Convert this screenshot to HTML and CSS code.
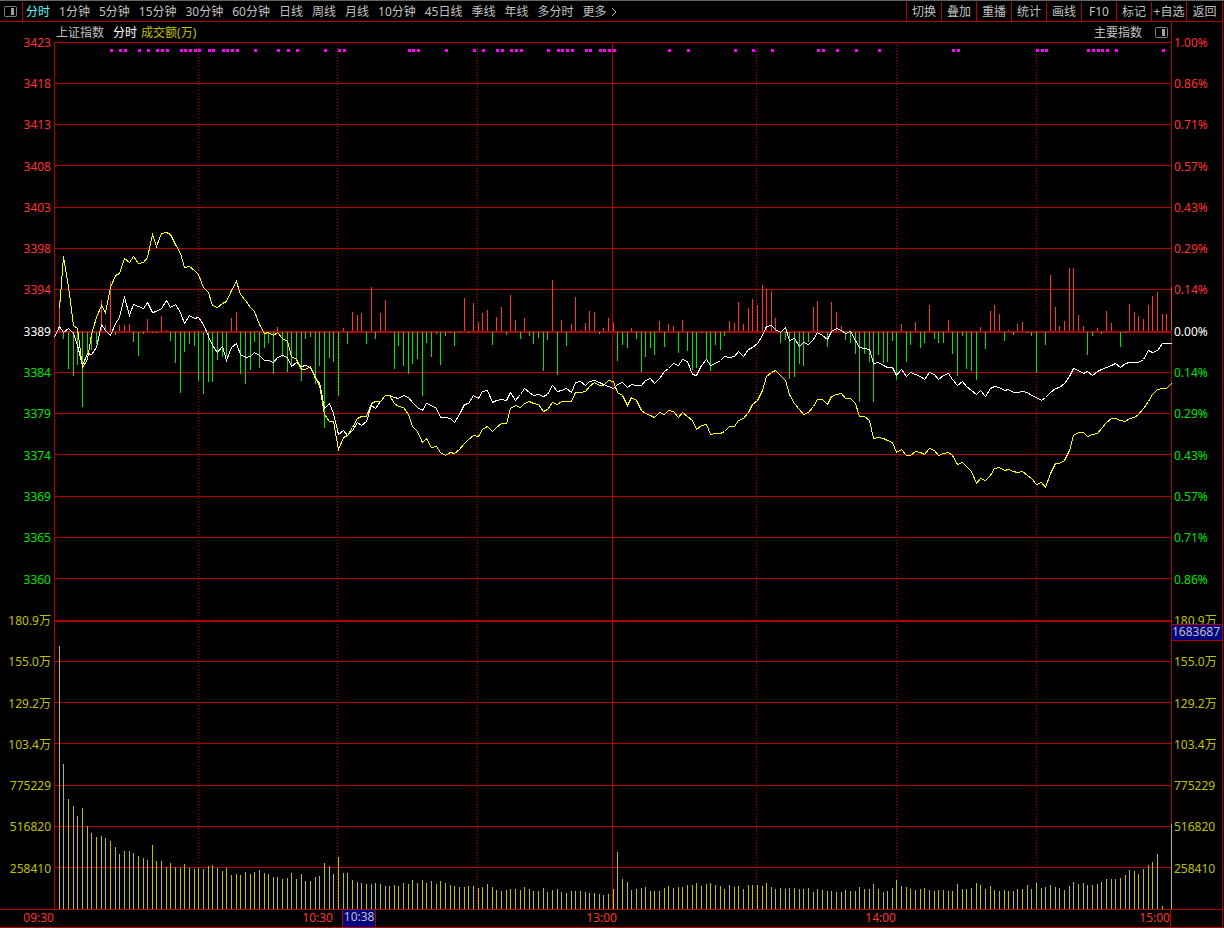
FILE: index.html
```html
<!DOCTYPE html>
<html lang="zh">
<head>
  <meta charset="UTF-8">
  <meta name="viewport" content="width=device-width, initial-scale=1.0">
  <title>上证指数 分时</title>
  <link rel="stylesheet" href="styles.css">
</head>
<body>
  <!-- 顶部工具栏 -->
  <header class="toolbar">
    <button class="panel-toggle" type="button" aria-label="侧栏">
      <svg class="panel-icon" viewBox="0 0 13 11"><rect x="0.5" y="0.5" width="12" height="10" rx="1"/><path d="M7 2h3v7h-3z"/></svg>
    </button>
    <nav class="periods">
      <button class="active" type="button">分时</button>
      <button type="button">1分钟</button>
      <button type="button">5分钟</button>
      <button type="button">15分钟</button>
      <button type="button">30分钟</button>
      <button type="button">60分钟</button>
      <button type="button">日线</button>
      <button type="button">周线</button>
      <button type="button">月线</button>
      <button type="button">10分钟</button>
      <button type="button">45日线</button>
      <button type="button">季线</button>
      <button type="button">年线</button>
      <button type="button">多分时</button>
      <button class="more" type="button">更多<svg class="arrow" viewBox="0 0 6 10"><path d="M1 1l4 4l-4 4"/></svg></button>
    </nav>
    <div class="tools">
      <button type="button">切换</button>
      <button type="button">叠加</button>
      <button type="button">重播</button>
      <button type="button">统计</button>
      <button type="button">画线</button>
      <button type="button">F10</button>
      <button type="button">标记</button>
      <button type="button">+自选</button>
      <button type="button">返回</button>
    </div>
  </header>

  <main class="board">
    <!-- 左侧坐标 -->
    <div class="axis axis-left">
      <span class="up">3423</span>
      <span class="up">3418</span>
      <span class="up">3413</span>
      <span class="up">3408</span>
      <span class="up">3403</span>
      <span class="up">3398</span>
      <span class="up">3394</span>
      <span class="flat">3389</span>
      <span class="down">3384</span>
      <span class="down">3379</span>
      <span class="down">3374</span>
      <span class="down">3369</span>
      <span class="down">3365</span>
      <span class="down">3360</span>
      <span class="vol">180.9万</span>
      <span class="vol">155.0万</span>
      <span class="vol">129.2万</span>
      <span class="vol">103.4万</span>
      <span class="vol">775229</span>
      <span class="vol">516820</span>
      <span class="vol">258410</span>
    </div>

    <section class="plot">
      <div class="plot-head">
        <span>上证指数</span>
        <span class="mode">分时</span>
        <span class="amount">成交额(万)</span>
        <span class="indexes">主要指数</span>
        <button class="panel-toggle" type="button" aria-label="指数栏">
          <svg class="panel-icon" viewBox="0 0 13 11"><rect x="0.5" y="0.5" width="12" height="10" rx="1"/><path d="M7 2h3v7h-3z"/></svg>
        </button>
      </div>
      <svg class="chart" viewBox="0 0 1118 867" preserveAspectRatio="none">
        <path class="grid" id="grid"/>
        <path class="grid-dotted" id="grid-dotted"/>
        <path class="bar-vol" id="bar-vol"/>
        <path class="bar-up" id="bar-up"/>
        <path class="bar-down" id="bar-down"/>
        <path class="line-price" id="line-price"/>
        <path class="line-avg" id="line-avg"/>
        <path class="marks" id="marks"/>
      </svg>
    </section>

    <!-- 右侧坐标 -->
    <div class="axis axis-right">
      <span class="up">1.00%</span>
      <span class="up">0.86%</span>
      <span class="up">0.71%</span>
      <span class="up">0.57%</span>
      <span class="up">0.43%</span>
      <span class="up">0.29%</span>
      <span class="up">0.14%</span>
      <span class="flat">0.00%</span>
      <span class="down">0.14%</span>
      <span class="down">0.29%</span>
      <span class="down">0.43%</span>
      <span class="down">0.57%</span>
      <span class="down">0.71%</span>
      <span class="down">0.86%</span>
      <span class="vol">180.9万</span>
      <span class="vol">155.0万</span>
      <span class="vol">129.2万</span>
      <span class="vol">103.4万</span>
      <span class="vol">775229</span>
      <span class="vol">516820</span>
      <span class="vol">258410</span>
      <div class="cursor-value">1683687</div>
    </div>
  </main>

  <footer class="times">
    <span>09:30</span>
    <span>10:30</span>
    <span>13:00</span>
    <span>14:00</span>
    <span>15:00</span>
    <div class="cursor-time">10:38</div>
  </footer>

  <script src="chart.js"></script>
</body>
</html>
```

FILE: styles.css
```css
/* 页面基础样式 */
* {
  box-sizing: border-box;
}

body {
  margin: 0;
  min-height: 100vh;
  display: flex;
  flex-direction: column;
  border-top: 1px solid #666;
  background-color: #000;
  color: #c0c0c0;
  font-family: "Noto Sans", "Noto Sans CJK SC", sans-serif;
  font-size: 12px;
  line-height: 16px;
}

button {
  padding: 0;
  border: 0;
  background: none;
  color: inherit;
  font: inherit;
  white-space: nowrap;
  cursor: pointer;
}

/* 顶部工具栏 */
.toolbar {
  display: flex;
  height: 21px;
  margin-right: 1px;
  padding-top: 1px;
  border-bottom: 1px solid #b00000;
}

.toolbar .panel-toggle {
  width: 23px;
  padding-left: 4px;
  border-right: 1px solid #b00000;
}

.panel-icon {
  display: block;
  width: 13px;
  height: 11px;
}

.panel-icon rect {
  fill: none;
  stroke: #808080;
}

.panel-icon path {
  fill: #a0a0a0;
}

.periods {
  display: flex;
  gap: 9px;
  padding-left: 3px;
}

.periods .active {
  color: #54fcfc;
}

.more {
  display: flex;
  align-items: center;
  gap: 4px;
}

.arrow {
  width: 6px;
  height: 10px;
  fill: none;
  stroke: #c0c0c0;
}

.tools {
  display: flex;
  margin-left: auto;
  border-right: 1px solid #b00000;
}

.tools button {
  width: 35px;
  border-left: 1px solid #b00000;
}

.tools button:last-child {
  width: 36px;
}

/* 主图区域 */
.board {
  flex: 1;
  display: grid;
  grid-template-columns: 54px 1fr 51px;
  margin-right: 1px;
}

.axis {
  position: relative;
  display: grid;
  grid-template-rows: repeat(21, 40fr) 19fr;
  align-items: center;
}

.axis-left {
  padding-right: 3px;
  text-align: right;
}

.axis-right {
  padding-left: 2px;
  border-right: 1px solid #b00000;
}

.up {
  color: #ff3232;
}

.down {
  color: #00e600;
}

.flat {
  color: #fff;
}

.vol {
  color: #c0c000;
}

/* 光标处数值 */
.cursor-value {
  position: absolute;
  top: 67.9%;
  left: 0;
  right: 0;
  height: 17px;
  border: solid #b00000;
  border-width: 1px 0;
  background-color: #000080;
  line-height: 14px;
  color: #c0c0c0;
}

.plot {
  display: flex;
  flex-direction: column;
}

.plot-head {
  display: flex;
  align-items: center;
  height: 20px;
  padding: 1px 3px 0 2px;
  border-right: 1px solid #b00000;
}

.mode {
  margin-left: 9px;
  color: #fff;
}

.amount {
  margin-left: 4px;
  color: #c0c000;
}

.indexes {
  margin-left: auto;
  margin-right: 13px;
}

.chart {
  flex: 1;
  width: 100%;
  height: 0;
  min-height: 400px;
  shape-rendering: crispEdges;
}

.chart path {
  fill: none;
  stroke-width: 1px;
  vector-effect: non-scaling-stroke;
}

.chart .grid {
  stroke: #b00000;
}

.chart .grid-dotted {
  stroke: #b00000;
  stroke-dasharray: 1 2;
}

.chart .bar-vol {
  stroke: #c0c000;
}

.chart .bar-up {
  stroke: #ff3232;
}

.chart .bar-down {
  stroke: #00e600;
}

.chart .line-price {
  stroke: #fff;
}

.chart .line-avg {
  stroke: #ff0;
}

.chart .marks {
  stroke: #f0f;
  stroke-width: 3px;
}

/* 时间轴 */
.times {
  position: relative;
  display: grid;
  grid-template-columns: 54px 279fr 284fr 279fr 275fr 51px;
  height: 19px;
  margin-right: 1px;
  border: solid #b00000;
  border-width: 1px 1px 1px 0;
  color: #ff3232;
  text-align: right;
}

.times span:nth-child(5) {
  border-right: 1px solid #b00000;
}

.cursor-time {
  position: absolute;
  top: 0;
  bottom: 0;
  left: 28%;
  width: 34px;
  border: solid #b00000;
  border-width: 0 1px;
  background-color: #000080;
  line-height: 14px;
  color: #c0c0c0;
  text-align: center;
}
```

FILE: chart.js
```js
// 每分钟一个点，数值为相对昨收线的高度
const price = [
  -5, 6, 0, 4, -1, -13, -33, -21, -22, -15, 8, 2, -3, 9, 15, 35, 17, 28, 26, 24,
  30, 20, 21, 24, 32, 25, 28, 20, 9, 17, 14, 15, 8, -4, -13, -20, -14, -28, -15, -11,
  -22, -25, -24, -20, -23, -28, -28, -30, -25, -23, -25, -34, -30, -34, -33, -35, -46, -50, -76, -71,
  -81, -102, -98, -103, -98, -90, -93, -89, -73, -76, -69, -63, -63, -65, -66, -63, -65, -70, -75, -78,
  -71, -73, -76, -85, -85, -86, -90, -82, -72, -71, -63, -66, -59, -58, -70, -68, -67, -68, -60, -68,
  -62, -56, -60, -63, -62, -64, -62, -53, -59, -58, -56, -60, -50, -49, -53, -49, -48, -50, -52, -54,
  -56, -52, -50, -55, -52, -53, -53, -48, -46, -51, -46, -39, -36, -31, -33, -27, -29, -42, -43, -33,
  -27, -33, -31, -28, -24, -25, -24, -19, -24, -17, -15, -11, -3, 6, 7, 3, 0, 5, -8, -6,
  -14, -10, -12, -7, 0, -3, -7, 1, 4, 2, -1, 1, -8, -15, -16, -17, -31, -30, -33, -35,
  -35, -43, -37, -44, -40, -42, -44, -47, -40, -42, -47, -43, -41, -47, -53, -49, -54, -58, -62, -58,
  -64, -56, -54, -55, -58, -57, -60, -60, -59, -60, -63, -65, -68, -65, -60, -56, -55, -51, -44, -36,
  -38, -41, -39, -43, -39, -37, -35, -33, -31, -35, -31, -30, -30, -30, -27, -18, -20, -18, -11, -11, -11
];

// 从第一分钟开始
const average = [
  24, 76, 46, 7, 4, -35, -27, -2, 15, 27, 20, 45, 57, 59, 74, 70, 76, 69, 70,
  75, 98, 86, 99, 100, 98, 88, 79, 65, 66, 62, 58, 45, 40, 27, 25, 29, 31, 42, 51,
  38, 32, 25, 21, 8, -1, 0, -3, 0, -6, -9, -24, -27, -37, -37, -34, -45, -53, -82, -89,
  -89, -117, -105, -103, -95, -86, -84, -84, -71, -69, -69, -63, -63, -71, -74, -75, -82, -94, -99, -110,
  -106, -115, -114, -120, -123, -120, -121, -117, -111, -107, -103, -104, -97, -94, -99, -95, -91, -91, -76, -73,
  -75, -71, -69, -71, -72, -79, -77, -70, -72, -69, -69, -69, -60, -60, -59, -54, -50, -53, -53, -48,
  -49, -60, -63, -73, -65, -68, -78, -81, -83, -85, -80, -82, -78, -79, -85, -80, -84, -88, -97, -93,
  -92, -102, -101, -101, -99, -94, -94, -88, -86, -80, -72, -68, -58, -44, -40, -38, -43, -48, -62, -71,
  -77, -82, -80, -74, -67, -67, -72, -64, -62, -61, -66, -66, -71, -84, -84, -88, -106, -105, -106, -108,
  -110, -120, -117, -123, -123, -119, -120, -122, -116, -118, -123, -121, -120, -123, -132, -130, -134, -139, -151, -146,
  -148, -143, -136, -135, -138, -137, -139, -140, -139, -143, -146, -152, -150, -155, -141, -131, -131, -128, -118, -103,
  -100, -100, -104, -102, -101, -96, -90, -86, -86, -88, -89, -86, -85, -82, -76, -69, -62, -57, -56, -56, -51
];

// 红绿柱
const power = [
  31, -7, -37, -44, -33, -75, -22, -18, -12, 31, 6, 49, -3, 6, 6, 7, -10, -24, -2,
  12, -1, -1, 15, 1, -9, -31, -61, -20, -12, -14, -49, -62, -50, -50, -28, -25, -24, 13, 19,
  -42, -52, -38, -10, -36, -16, -11, -42, 4, -25, -40, -35, -28, -49, -7, -5, -52, -34, -96, -26,
  -30, -64, 3, -12, 19, 16, 18, -12, 44, -7, 18, 31, 0, -37, -14, -34, -42, -32, -27, -64,
  -11, -25, -2, -33, -4, -1, -14, -1, 33, -1, 28, 9, 18, 21, -13, 14, 24, -3, 36, 11,
  -7, 13, -4, -12, -6, -39, -8, 51, -43, 11, -14, 7, 34, 1, 8, 20, 19, -2, 3, 13,
  8, -29, -13, -16, 3, -7, -40, -25, -16, -23, 10, -15, 7, 5, -21, 11, -19, -38, -36, -1,
  -28, -39, -13, -18, -4, 10, 8, 29, 7, 23, 32, 26, 46, 42, 40, 13, -11, -8, -47, -45,
  -32, -34, -10, 24, 30, -1, -15, 29, 19, 5, -8, -11, -22, -70, -22, -30, -70, -23, -31, -30,
  -9, -48, 7, -30, -13, 9, -16, -11, 26, -7, -11, -11, 11, -22, -44, -4, -37, -39, -48, 4,
  -17, 20, 26, 17, -9, 1, -3, 7, 9, -1, -4, -41, 0, -13, 56, 24, 5, 10, 63, 63,
  16, 5, -23, -4, 3, -2, 20, 8, 0, -15, -1, 27, 19, 15, 12, 26, 35, 39, 17, 17, 44
];

// 成交额
const volume = [
  263, 145, 110, 103, 93, 101, 83, 76, 72, 73, 71, 68, 62, 55, 58, 58, 56, 53, 51,
  49, 64, 48, 48, 42, 46, 42, 41, 45, 41, 40, 41, 40, 43, 44, 41, 38, 41, 34, 35,
  34, 37, 35, 37, 39, 36, 35, 32, 32, 30, 31, 36, 30, 35, 28, 28, 32, 33, 46, 43,
  35, 52, 36, 36, 29, 27, 26, 25, 25, 26, 25, 23, 23, 24, 23, 26, 25, 29, 26, 29,
  26, 28, 25, 28, 26, 24, 23, 22, 22, 23, 23, 21, 22, 25, 22, 19, 18, 19, 20, 20,
  19, 22, 20, 18, 18, 21, 17, 19, 20, 17, 16, 18, 18, 18, 17, 16, 16, 15, 14, 15,
  20, 57, 30, 27, 19, 20, 21, 22, 18, 18, 18, 21, 23, 21, 22, 22, 24, 24, 26, 23,
  25, 26, 24, 23, 20, 24, 22, 23, 20, 24, 24, 24, 23, 26, 22, 20, 21, 20, 21, 21,
  20, 20, 21, 17, 20, 19, 18, 18, 17, 17, 19, 18, 18, 22, 20, 20, 25, 20, 17, 18,
  21, 29, 23, 22, 20, 19, 20, 21, 19, 18, 19, 19, 18, 18, 25, 20, 20, 21, 26, 24,
  20, 23, 19, 18, 19, 18, 18, 20, 20, 24, 20, 26, 21, 22, 24, 22, 21, 19, 23, 27,
  25, 26, 24, 24, 25, 27, 30, 30, 30, 31, 34, 39, 38, 35, 40, 44, 47, 55, 3, 0, 85
];

// 顶部标记所在的分钟
const marks = [
  12, 14, 15, 18, 20, 22, 23, 24, 27, 28, 29, 30, 31, 33, 34, 36, 37, 38, 39, 43, 48, 50, 52, 58, 61, 62,
  76, 77, 78, 84, 90, 92, 95, 96, 98, 99, 100, 106, 108, 109, 110, 111, 114, 115, 117, 118, 119, 120,
  132, 136, 146, 150, 154, 164, 165, 168, 172, 177, 193, 194, 211, 212, 213, 222, 223, 224, 225, 226, 228, 238
];

const ZERO = 290;
const BOTTOM = 867;

function minuteX(i) {
  return Math.floor(0.6 + i * 4.654) + 0.5;
}

function setPath(id, d) {
  document.getElementById(id).setAttribute('d', d);
}

function linePath(values, start) {
  return values.map((v, i) => (i ? 'L' : 'M') + minuteX(i + start) + ' ' + (ZERO - v + 0.5)).join('');
}

// 网格
let grid = 'M0.5 0V867M558.5 0V867M1117.5 0V867';
for (let i = 0; i < 21; i++) {
  grid += 'M0 ' + (Math.floor(i * 41.29) + 0.5) + 'H1118';
}
// 零线和副图分界线加粗
grid += 'M0 290.5H1118M0 579.5H1118';
setPath('grid', grid);
setPath('grid-dotted', [144, 283, 423, 702, 842, 982].map(x => 'M' + (x + 0.5) + ' 3V867').join(''));

let up = '', down = '';
power.forEach((v, i) => {
  if (v > 0) up += 'M' + minuteX(i + 1) + ' 289v' + -v;
  if (v < 0) down += 'M' + minuteX(i + 1) + ' 290v' + -v;
});
setPath('bar-up', up);
setPath('bar-down', down);
setPath('bar-vol', volume.map((v, i) => 'M' + minuteX(i + 1) + ' ' + BOTTOM + 'v' + -v).join(''));

setPath('line-price', linePath(price, 0));
setPath('line-avg', linePath(average, 1));
setPath('marks', marks.map(i => 'M' + (minuteX(i) - 0.5) + ' 8.5h3').join(''));
```
